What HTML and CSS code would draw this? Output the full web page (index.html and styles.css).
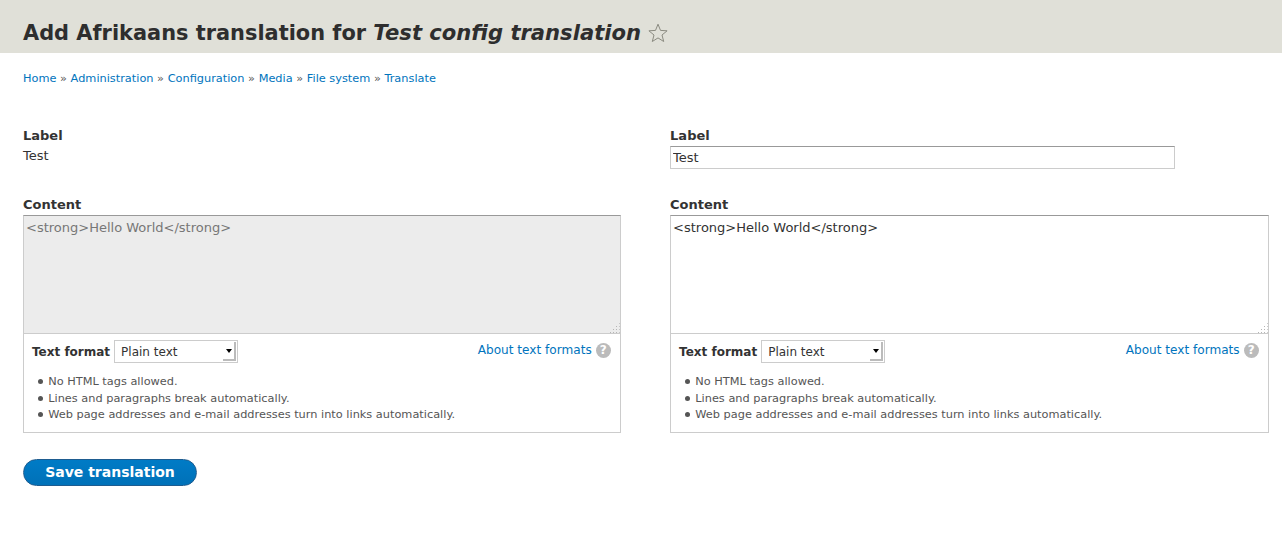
FILE: index.html
```html
<!DOCTYPE html>
<html lang="en">
<head>
    <meta charset="UTF-8">
    <title>Add Afrikaans translation for Test config translation</title>
    <link rel="stylesheet" href="styles.css">
</head>
<body>
    <!-- Page title -->
    <header class="page-head">
        <h1>Add Afrikaans translation for <em>Test config translation</em></h1>
        <svg class="star" width="20" height="20" viewBox="0 0 20 20"><path d="M10 1.2l2.5 6.2 6.6.4-5.1 4.2 1.7 6.5L10 14.9l-5.7 3.6L6 12 .9 7.8l6.6-.4z" fill="none" stroke="#8a8a80" stroke-width="1"/></svg>
    </header>

    <nav class="breadcrumb">
        <a href="#">Home</a> » <a href="#">Administration</a> » <a href="#">Configuration</a> » <a href="#">Media</a> » <a href="#">File system</a> » <a href="#">Translate</a>
    </nav>

    <form class="translation-form">
        <div class="columns">
            <!-- Source -->
            <div class="column">
                <div class="form-group label-group">
                    <label>Label</label>
                    <div class="source-value">Test</div>
                </div>
                <div class="form-group">
                    <label>Content</label>
                    <div class="textarea-wrap">
                        <textarea class="disabled" disabled>&lt;strong&gt;Hello World&lt;/strong&gt;</textarea>
                        <span class="grip"></span>
                    </div>
                    <div class="format-box">
                        <div class="format-top">
                            <span class="format-label">Text format</span>
                            <span class="fake-select">Plain text<span class="arrow"></span></span>
                            <span class="format-help"><a href="#">About text formats</a><span class="help-icon">?</span></span>
                        </div>
                        <ul class="tips">
                            <li>No HTML tags allowed.</li>
                            <li>Lines and paragraphs break automatically.</li>
                            <li>Web page addresses and e-mail addresses turn into links automatically.</li>
                        </ul>
                    </div>
                </div>
            </div>

            <!-- Translation -->
            <div class="column">
                <div class="form-group label-group">
                    <label for="label-input">Label</label>
                    <input type="text" id="label-input" value="Test">
                </div>
                <div class="form-group">
                    <label for="content-input">Content</label>
                    <div class="textarea-wrap">
                        <textarea id="content-input">&lt;strong&gt;Hello World&lt;/strong&gt;</textarea>
                        <span class="grip"></span>
                    </div>
                    <div class="format-box">
                        <div class="format-top">
                            <span class="format-label">Text format</span>
                            <span class="fake-select">Plain text<span class="arrow"></span></span>
                            <span class="format-help"><a href="#">About text formats</a><span class="help-icon">?</span></span>
                        </div>
                        <ul class="tips">
                            <li>No HTML tags allowed.</li>
                            <li>Lines and paragraphs break automatically.</li>
                            <li>Web page addresses and e-mail addresses turn into links automatically.</li>
                        </ul>
                    </div>
                </div>
            </div>
        </div>

        <button type="button" class="save-button">Save translation</button>
    </form>
</body>
</html>
```

FILE: styles.css
```css
* {
  margin: 0;
  padding: 0;
  box-sizing: border-box;
}

body {
  font-family: "DejaVu Sans", sans-serif;
  font-size: 13px;
  line-height: 18px;
  color: #333;
  background-color: #fff;
}

a {
  color: #0074bd;
  text-decoration: none;
}

.page-head {
  display: flex;
  align-items: center;
  height: 53px;
  padding: 13px 23px 0;
  background-color: #e0e0d8;
}

.page-head h1 {
  font-size: 20.9px;
  line-height: 28px;
  font-weight: bold;
  color: #2e2e2e;
}

.page-head em {
  font-size: 21.1px;
}

.star {
  margin-left: 7px;
}

.breadcrumb {
  margin-top: 16px;
  padding: 0 23px;
  font-size: 11.33px;
  line-height: 18px;
  color: #555;
}

.translation-form {
  padding: 0 13px 0 23px;
  margin-top: 41px;
}

.columns {
  display: grid;
  grid-template-columns: 597.7px 598.6px;
  column-gap: 49.4px;
}

.form-group label {
  display: block;
  font-weight: bold;
  line-height: 15px;
}

.label-group {
  height: 69px;
}

.source-value {
  margin-top: 4px;
}

.label-group input {
  display: block;
  width: 505px;
  height: 23px;
  margin-top: 3px;
  padding: 0 2px;
  font: 13px "DejaVu Sans", sans-serif;
  color: #333;
  border: 1px solid #ccc;
  border-top-color: #999;
  outline: none;
}

.textarea-wrap {
  position: relative;
  margin-top: 3px;
}

.textarea-wrap textarea {
  display: block;
  width: 100%;
  height: 119px;
  padding: 3px 2px;
  font: 13px/18px "DejaVu Sans", sans-serif;
  color: #333;
  border: 1px solid #ccc;
  border-top-color: #999;
  resize: none;
  outline: none;
}

.textarea-wrap textarea.disabled {
  background-color: #ececec;
  color: #777;
}

.grip {
  position: absolute;
  right: 1px;
  bottom: 1px;
  width: 11px;
  height: 11px;
  background: radial-gradient(circle, #b5b5b5 1px, transparent 1px) 0 0 / 3px 3px;
  clip-path: polygon(100% 0, 100% 100%, 0 100%);
}

.format-box {
  height: 99px;
  padding: 6px 9px 0 8px;
  border: 1px solid #ccc;
  border-top: none;
}

.format-top {
  display: flex;
  align-items: flex-start;
  font-size: 12px;
}

.format-label {
  margin-top: 3px;
  font-weight: bold;
}

.fake-select {
  position: relative;
  width: 124px;
  height: 23px;
  margin-left: 4px;
  padding: 2px 6px;
  border: 1px solid #ccc;
  background-color: #fff;
}

.arrow {
  position: absolute;
  top: 1px;
  right: 1px;
  width: 13px;
  height: 19px;
  border-right: 2px solid #bbb;
  border-bottom: 2px solid #bbb;
}

.arrow::after {
  content: "";
  position: absolute;
  top: 7px;
  left: 3px;
  border: 3.5px solid transparent;
  border-top: 4px solid #000;
  border-bottom: none;
}

.format-help {
  display: flex;
  align-items: center;
  margin-left: auto;
  margin-top: 1px;
  font-size: 12.1px;
}

.help-icon {
  width: 15px;
  height: 15px;
  margin-left: 4px;
  border-radius: 50%;
  background-color: #bbb;
  color: #fff;
  font-size: 12px;
  font-weight: bold;
  line-height: 15px;
  text-align: center;
}

.tips {
  margin-top: 10px;
  padding-left: 16.2px;
  font-size: 11.33px;
  line-height: 16.5px;
  color: #555;
  list-style: none;
}

.tips li {
  position: relative;
}

.tips li::before {
  content: "";
  position: absolute;
  top: 6px;
  left: -10px;
  width: 5px;
  height: 5px;
  border-radius: 50%;
  background-color: #555;
}

.save-button {
  display: block;
  width: 174px;
  height: 27px;
  margin-top: 26px;
  padding-bottom: 2px;
  font: bold 14px "DejaVu Sans", sans-serif;
  color: #fff;
  background: linear-gradient(#007bc6, #0071b8);
  border: 1px solid #1e5c90;
  border-radius: 14px;
  cursor: pointer;
}
```
